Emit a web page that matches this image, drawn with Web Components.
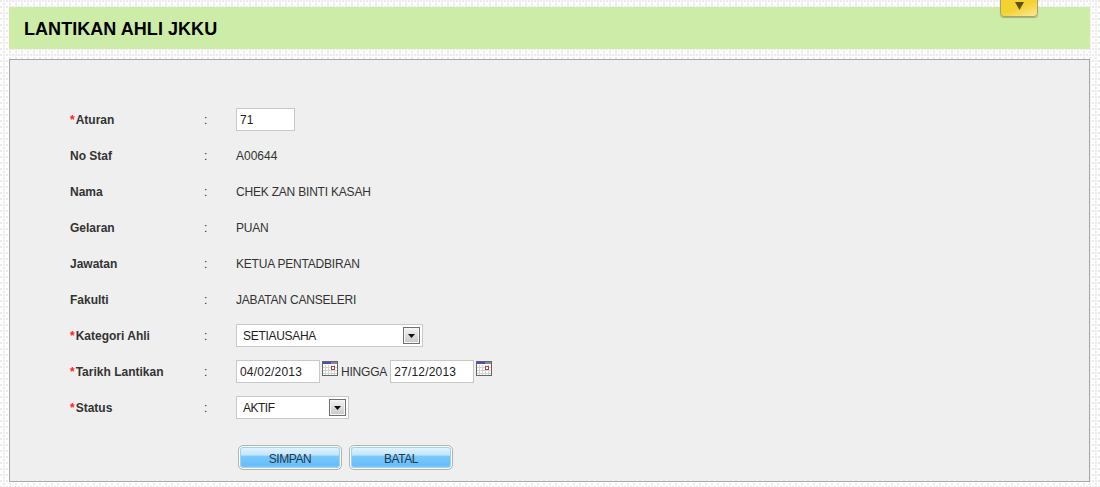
<!DOCTYPE html>
<html>
<head>
<meta charset="utf-8">
<title>Lantikan Ahli JKKU</title>
<style>
  html, body { margin: 0; height: 100%; }
  body {
    font-family: "Liberation Sans", Arial, sans-serif;
    background-color: #fff;
    /* titik latar halaman */
    background-image:
      radial-gradient(circle at 1px 1px, #ebebeb .8px, transparent .9px),
      radial-gradient(circle at 1px 1px, #ebebeb .8px, transparent .9px),
      radial-gradient(circle at 1px 1px, #ebebeb .8px, transparent .9px);
    background-size: 6px 6px;
    background-position: 0 0, 3px 0, 3px 3px;
    overflow: hidden;
  }
</style>
</head>
<body>
<jk-page>
  <jk-title slot="title">LANTIKAN AHLI JKKU</jk-title>
  <jk-panel>
    <jk-row label="Aturan" required><jk-input value="71" width="59"></jk-input></jk-row>
    <jk-row label="No Staf"><span style="letter-spacing:0">A00644</span></jk-row>
    <jk-row label="Nama">CHEK ZAN BINTI KASAH</jk-row>
    <jk-row label="Gelaran">PUAN</jk-row>
    <jk-row label="Jawatan">KETUA PENTADBIRAN</jk-row>
    <jk-row label="Fakulti">JABATAN CANSELERI</jk-row>
    <jk-row label="Kategori Ahli" required><jk-select value="SETIAUSAHA" width="187" style="letter-spacing:-.3px"></jk-select></jk-row>
    <jk-row label="Tarikh Lantikan" required>
      <jk-date value="04/02/2013"></jk-date><span style="margin-right:3px">HINGGA</span><jk-date value="27/12/2013"></jk-date>
    </jk-row>
    <jk-row label="Status" required><jk-select value="AKTIF" width="113" style="letter-spacing:-.5px"></jk-select></jk-row>
    <jk-actions>
      <jk-button>SIMPAN</jk-button>
      <jk-button>BATAL</jk-button>
    </jk-actions>
  </jk-panel>
</jk-page>

<script>
// bahagian atas + panel borang
class JkPage extends HTMLElement {
  constructor() {
    super();
    this.attachShadow({ mode: "open" });
    this.shadowRoot.innerHTML = `
      <style>
        :host { display: flex; flex-direction: column; gap: 10px; padding: 7px 10px 0 9px; position: relative; }
        .tab {
          position: absolute; left: 1000px; top: -6px; width: 38px; height: 23px;
          box-sizing: border-box; border-radius: 4px; border: 1px solid #a9a46a;
          box-shadow: 0 1px 1px rgba(0,0,0,.25);
          background: linear-gradient(160deg, #f3d232 0%, #f3d232 55%, #fbe99a 100%);
          display: flex; align-items: flex-end; justify-content: center; padding-bottom: 6px;
        }
      </style>
      <slot name="title"></slot>
      <slot></slot>
      <div class="tab">
        <svg width="9" height="8" viewBox="0 0 9 8"><path d="M0 0H9L4.500 8Z" fill="#5e4f12"/></svg>
      </div>
    `;
  }
}

class JkTitle extends HTMLElement {
  constructor() {
    super();
    this.attachShadow({ mode: "open" });
    this.shadowRoot.innerHTML = `
      <style>
        :host {
          display: block; height: 42px; line-height: 44px; padding-left: 15px;
          background: #cdeca8; color: #000; font-size: 18px; font-weight: bold; letter-spacing: .05px;
        }
      </style>
      <slot></slot>
    `;
  }
}

class JkPanel extends HTMLElement {
  constructor() {
    super();
    this.attachShadow({ mode: "open" });
    this.shadowRoot.innerHTML = `
      <style>
        :host {
          display: flex; flex-direction: column; box-sizing: border-box; height: 423px;
          padding: 42px 0 0 60px; background: #efefef; border: 1px solid #a8a8a8;
          color: #333; font-size: 12px;
        }
      </style>
      <slot></slot>
    `;
  }
}

class JkRow extends HTMLElement {
  constructor() {
    super();
    this.attachShadow({ mode: "open" });
    this.shadowRoot.innerHTML = `
      <style>
        :host { display: grid; grid-template-columns: 134px 32px 1fr; height: 36px; align-items: center; }
        .label { font-weight: bold; color: #333; }
        .label b { color: #f22; font-weight: bold; margin-right: 1px; }
        .value { display: flex; align-items: center; color: #333; letter-spacing: -.2px; }
      </style>
      <div class="label"></div>
      <div>:</div>
      <div class="value"><slot></slot></div>
    `;
  }

  connectedCallback() {
    const label = this.shadowRoot.querySelector(".label");
    label.textContent = this.getAttribute("label");
    if (this.hasAttribute("required")) {
      const star = document.createElement("b");
      star.textContent = "*";
      label.prepend(star);
    }
  }
}

class JkInput extends HTMLElement {
  constructor() {
    super();
    this.attachShadow({ mode: "open" });
    this.shadowRoot.innerHTML = `
      <style>
        :host { display: block; margin-bottom: 1px; }
        input {
          display: block; box-sizing: border-box; height: 23px; padding: 0 3px; margin: 0;
          border: 1px solid #c8c8c8; background: #fff; color: #222; outline: none;
          font: 12px "Liberation Sans", Arial, sans-serif; letter-spacing: .2px;
        }
      </style>
      <input type="text">
    `;
  }

  static get observedAttributes() {
    return ["value", "width"];
  }

  attributeChangedCallback(name, oldValue, newValue) {
    const input = this.shadowRoot.querySelector("input");
    if (name === "value") input.value = newValue;
    if (name === "width") input.style.width = newValue + "px";
  }
}

class JkSelect extends HTMLElement {
  constructor() {
    super();
    this.attachShadow({ mode: "open" });
    this.shadowRoot.innerHTML = `
      <style>
        :host { display: block; margin-bottom: 1px; }
        .box {
          box-sizing: border-box; height: 23px; display: flex; align-items: center; justify-content: space-between;
          padding: 0 2px 0 6px; border: 1px solid #c8c8c8; background: #fff; color: #222;
        }
        .btn {
          box-sizing: border-box; width: 17px; height: 17px; border: 1px solid #707070;
          box-shadow: inset 0 0 0 1px #f6f6f6;
          background: linear-gradient(#f4f4f4, #c8c8c8); display: flex; align-items: center; justify-content: center;
        }
      </style>
      <div class="box">
        <span></span>
        <div class="btn"><svg width="7" height="4" viewBox="0 0 7 4"><path d="M0 0H7L3.500 4Z" fill="#111"/></svg></div>
      </div>
    `;
  }

  connectedCallback() {
    const box = this.shadowRoot.querySelector(".box");
    box.style.width = this.getAttribute("width") + "px";
    box.querySelector("span").textContent = this.getAttribute("value");
  }
}

class JkDate extends HTMLElement {
  constructor() {
    super();
    this.attachShadow({ mode: "open" });
    this.shadowRoot.innerHTML = `
      <style>
        :host { display: flex; align-items: flex-start; }
        svg { display: block; margin: 1px 3px 0 2px; }
      </style>
      <jk-input width="84"></jk-input>
      <svg width="16" height="15" viewBox="0 0 16 15" shape-rendering="crispEdges">
        <rect x="0.500" y="0.500" width="15" height="14" fill="#fff" stroke="#666"/>
        <rect x="1" y="1" width="14" height="2" fill="#8a8a8a"/>
        <rect x="1" y="1" width="8" height="2" fill="#4c4fb0"/>
        <path d="M1 6.500H15M1 9.500H15M1 12.500H15M3.500 4V14M6.500 4V14M9.500 4V14M12.500 4V14" stroke="#d4d4d4" fill="none"/>
        <rect x="9.500" y="5.500" width="3" height="3" fill="#fff" stroke="#b04040"/>
      </svg>
    `;
  }

  connectedCallback() {
    this.shadowRoot.querySelector("jk-input").setAttribute("value", this.getAttribute("value"));
  }
}

class JkActions extends HTMLElement {
  constructor() {
    super();
    this.attachShadow({ mode: "open" });
    this.shadowRoot.innerHTML = `
      <style>
        :host { display: flex; gap: 7px; margin: 19px 0 0 168px; }
      </style>
      <slot></slot>
    `;
  }
}

class JkButton extends HTMLElement {
  constructor() {
    super();
    this.attachShadow({ mode: "open" });
    this.shadowRoot.innerHTML = `
      <style>
        :host {
          display: flex; align-items: center; justify-content: center; box-sizing: border-box;
          width: 104px; height: 25px; border: 1px solid #b4b4b4; border-radius: 5px;
          box-shadow: inset 0 0 0 1px #fff, inset 0 0 0 2px #9cd2f4; color: #23384a; font-size: 12px;
          padding-top: 2px; letter-spacing: -.4px;
          background: linear-gradient(#e8f6ff 0, #c4e6fd 38%, #78c8fb 46%, #68befa 85%, #a4d9fc 100%);
        }
      </style>
      <slot></slot>
    `;
  }
}

customElements.define("jk-input", JkInput);
customElements.define("jk-page", JkPage);
customElements.define("jk-title", JkTitle);
customElements.define("jk-panel", JkPanel);
customElements.define("jk-row", JkRow);
customElements.define("jk-select", JkSelect);
customElements.define("jk-date", JkDate);
customElements.define("jk-actions", JkActions);
customElements.define("jk-button", JkButton);
</script>
</body>
</html>
